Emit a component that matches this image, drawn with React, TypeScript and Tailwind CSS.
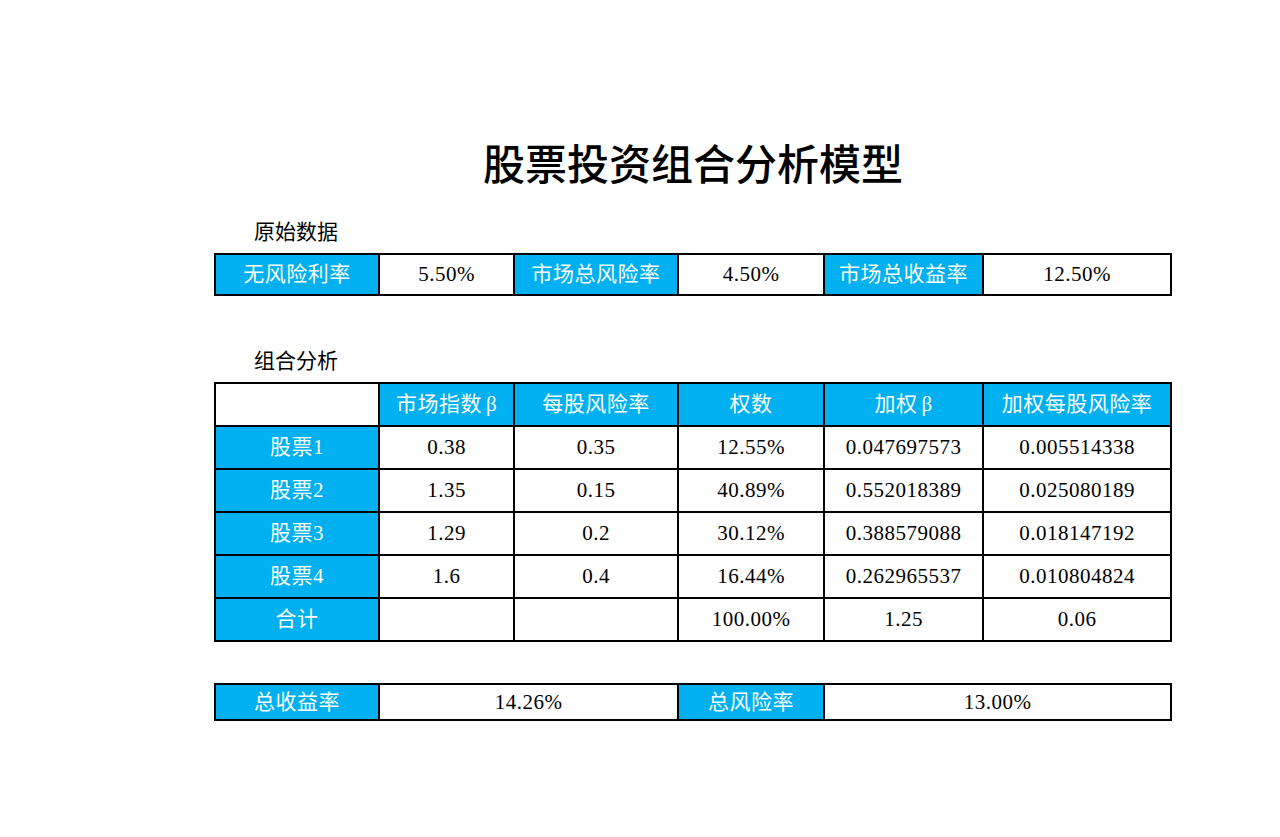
import React from "react";

const FONT = { fontFamily: '"Liberation Serif", "Noto Sans CJK SC", serif' };

function Cell({ blue, children, h }: { blue?: boolean; children?: React.ReactNode; h: string }) {
  return (
    <div
      className={`${h} flex items-center justify-center text-[21px] leading-none tracking-[0.5px] ${
        blue ? "bg-[#00b0f0] text-white" : "bg-white text-black"
      }`}
    >
      {children}
    </div>
  );
}

export default function App() {
  const rows = [
    ["股票1", "0.38", "0.35", "12.55%", "0.047697573", "0.005514338"],
    ["股票2", "1.35", "0.15", "40.89%", "0.552018389", "0.025080189"],
    ["股票3", "1.29", "0.2", "30.12%", "0.388579088", "0.018147192"],
    ["股票4", "1.6", "0.4", "16.44%", "0.262965537", "0.010804824"],
    ["合计", "", "", "100.00%", "1.25", "0.06"],
  ];
  const cols = "grid-cols-[162px_133px_162px_144px_157px_186px]";
  return (
    <div className="min-h-[837px] w-[1280px] bg-white" style={FONT}>
      <div className="ml-[214px] w-[958px] pt-[141px]">
        <div className="text-center text-[42px] font-medium leading-[50px] text-black">股票投资组合分析模型</div>
        <div className="mt-[26px] pl-[40px] text-[21px] leading-[30px] text-black">原始数据</div>
        <div className={`mt-[6px] grid ${cols} gap-[2px] bg-black p-[2px]`}>
          <Cell blue h="h-[39px]">无风险利率</Cell>
          <Cell h="h-[39px]">5.50%</Cell>
          <Cell blue h="h-[39px]">市场总风险率</Cell>
          <Cell h="h-[39px]">4.50%</Cell>
          <Cell blue h="h-[39px]">市场总收益率</Cell>
          <Cell h="h-[39px]">12.50%</Cell>
        </div>
        <div className="mt-[50px] pl-[40px] text-[21px] leading-[30px] text-black">组合分析</div>
        <div className={`mt-[6px] grid ${cols} gap-[2px] bg-black p-[2px]`}>
          <Cell h="h-[41px]"></Cell>
          <Cell blue h="h-[41px]">
            市场指数<span className="ml-[4px]">β</span>
          </Cell>
          <Cell blue h="h-[41px]">每股风险率</Cell>
          <Cell blue h="h-[41px]">权数</Cell>
          <Cell blue h="h-[41px]">
            加权<span className="ml-[4px]">β</span>
          </Cell>
          <Cell blue h="h-[41px]">加权每股风险率</Cell>
          {rows.map((r, i) =>
            r.map((c, j) => (
              <Cell key={`${i}-${j}`} blue={j === 0} h="h-[41px]">
                {c}
              </Cell>
            ))
          )}
        </div>
        <div className="mt-[41px] grid grid-cols-[162px_297px_144px_345px] gap-[2px] bg-black p-[2px]">
          <Cell blue h="h-[34px]">总收益率</Cell>
          <Cell h="h-[34px]">14.26%</Cell>
          <Cell blue h="h-[34px]">总风险率</Cell>
          <Cell h="h-[34px]">13.00%</Cell>
        </div>
      </div>
    </div>
  );
}
